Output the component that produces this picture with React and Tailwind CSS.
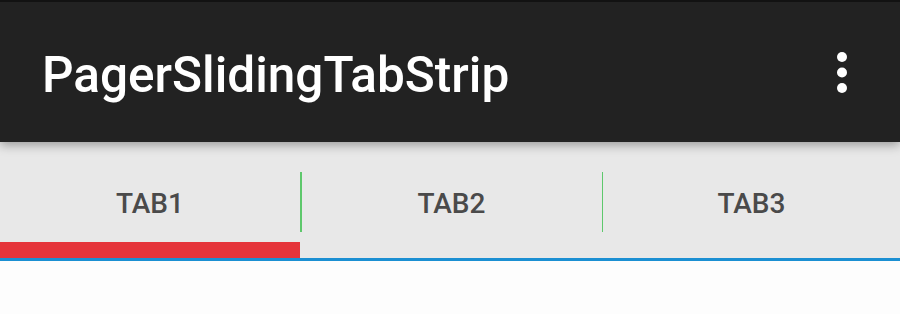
export default function App() {
  const tabs = ["TAB1", "TAB2", "TAB3"];
  return (
    <div className="w-[900px] h-[314px] bg-[#fdfdfd] overflow-hidden" style={{ fontFamily: "Roboto, 'Noto Sans', sans-serif" }}>
      <header className="relative z-10 h-[142px] bg-[#222222] border-t-2 border-[#121212] flex items-start justify-between pl-[42px] pr-[52px] shadow-[0_3px_10px_rgba(0,0,0,0.35)]">
        <h1 className="mt-[48px] text-[49.5px] leading-[50px] font-medium text-white">
          PagerSlidingTabStrip
        </h1>
        <svg className="mt-[48px]" width="12" height="44" viewBox="0 0 12 44">
          <circle cx="6" cy="7" r="5" fill="#ffffff" />
          <circle cx="6" cy="22.5" r="5" fill="#ffffff" />
          <circle cx="6" cy="38" r="5" fill="#ffffff" />
        </svg>
      </header>
      <div className="bg-[#e8e8e8]">
        <div className="flex h-[100px] items-start">
          {tabs.map((t, i) => (
            <div key={t} className="contents">
              <div className={i < 2 ? "w-[300px] flex justify-center" : "flex-1 flex justify-center"}>
                <span className="mt-[48px] text-[28px] leading-[28px] font-medium text-[#4a4a4a]">{t}</span>
              </div>
              {i < tabs.length - 1 && <div className="mt-[30px] w-[1.5px] h-[60px] bg-[#5ec86c]" />}
            </div>
          ))}
        </div>
        <div className="h-[16px] flex">
          <div className="w-[300px] bg-[#e5343a]" />
        </div>
        <div className="h-[3px] bg-[#1b8fd2]" />
      </div>
    </div>
  );
}
